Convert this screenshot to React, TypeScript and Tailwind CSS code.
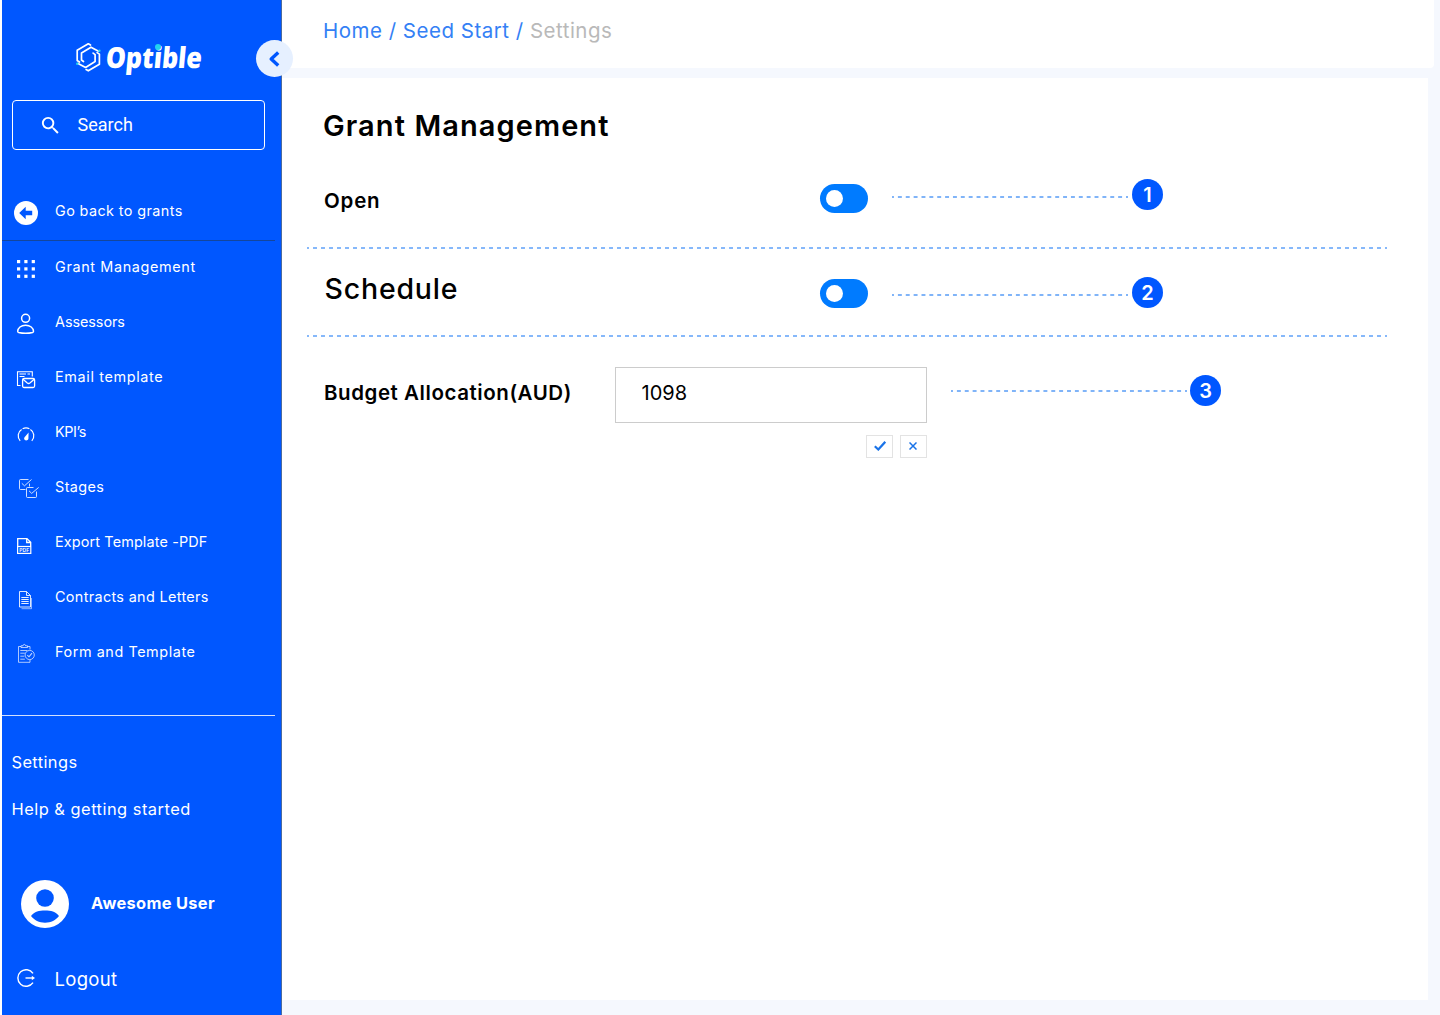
import type { ReactNode } from "react";

function Glyph({ children }: { children: ReactNode }) {
  return (
    <svg
      className="mt-[15px] h-6 w-6 shrink-0 overflow-visible"
      viewBox="0 0 24 24"
      fill="none"
      stroke="white"
      strokeWidth="1"
    >
      {children}
    </svg>
  );
}

const gridIcon = (
  <Glyph>
    {[3, 10.3, 17.7].map((y) =>
      [3, 10.3, 17.7].map((x) => (
        <rect key={`${x}-${y}`} x={x} y={y + 1} width="3.2" height="3.2" fill="white" stroke="none" />
      )),
    )}
  </Glyph>
);

const personIcon = (
  <Glyph>
    <g strokeWidth="1.5">
      <circle cx="11.6" cy="7.3" r="4" />
      <path d="M11.6 14.2c-4.6 0-7.800 2.800-7.900 6.100 0 .6.2.9.8 1.100 4.300 1 9.900 1 14.200 0 .6-.2.8-.5.8-1.100-.1-3.300-3.300-6.100-7.900-6.100z" />
    </g>
  </Glyph>
);

const emailIcon = (
  <Glyph>
    <path d="M6.500 19.500h-3V5.700h14.800v4.800M5.500 8h6.500M5.500 10.500h5M13.500 8h2.500" strokeWidth="1.100" />
    <rect x="8.600" y="12.500" width="12" height="9" rx="1.500" strokeWidth="1.300" />
    <path d="M9 13.200l4.300 3.800q1.300 1 2.600 0l4.300-3.800" strokeWidth="1.300" />
  </Glyph>
);

const gaugeIcon = (
  <Glyph>
    <path d="M6.200 19.800C2.900 16.300 3.900 10.600 7.600 8.400" strokeWidth="1.200" />
    <path d="M8.600 7.700C10.600 6.700 13.500 6.700 15.400 7.700" strokeWidth="1.200" />
    <path d="M16.400 8.400C20.100 10.600 21.100 16.300 17.800 19.800" strokeWidth="1.200" />
    <path d="M14.600 11.500l-.2 6.200c-.3 2.100-3.700 2.300-4.200.4-.3-1.100.3-2 1-2.700z" fill="white" stroke="none" />
  </Glyph>
);

const stagesIcon = (
  <Glyph>
    <g strokeWidth=".9" strokeOpacity=".9">
      <path d="M11.500 13.500H6.500q-1 0-1-1V4.500q0-1 1-1H14.500" />
      <path d="M7.800 7.300l2.700 2.500 7-6.300M15.500 7.500v3" />
      <path d="M19.500 11.500h-6q-1 0-1 1v8q0 1 1 1h8q1 0 1-1v-5" />
      <path d="M15 14.800l2.700 2.600 7-6" />
    </g>
  </Glyph>
);

const pdfIcon = (
  <Glyph>
    <path d="M3.700 15V7.600h9.300l3.700 3.700V15M12.700 7.600v3.900h4" strokeWidth="1.300" />
    <rect x="3.600" y="15.500" width="13.200" height="6.900" strokeWidth="1.200" />
    <text
      x="10.200"
      y="21"
      textAnchor="middle"
      fill="white"
      stroke="none"
      className="font-['Inter'] text-[5px] font-semibold"
    >
      PDF
    </text>
  </Glyph>
);

const contractsIcon = (
  <Glyph>
    <path d="M5.500 5.500h7l4 4v11.500h-11zM12.500 5.500v4h4" strokeOpacity=".85" />
    <path d="M7.300 11.500h7.400M7.300 13.500h7.400M7.300 15.500h7.400M7.300 17.500h7.400" strokeOpacity=".9" />
    <path d="M7.500 22.700h10V12" strokeOpacity=".55" />
  </Glyph>
);

const formIcon = (
  <Glyph>
    <g strokeWidth=".9" strokeOpacity=".75">
      <path d="M7 5.500H4.500v15.800h11.500V19M13.500 5.500h2.500v3" />
      <path d="M7 6.500V4.800h2q.2-1.400 1.300-1.400t1.300 1.400h2v1.700z" />
      <path d="M6.300 9.500h7M6.300 12.200h4.500M6.300 15.200h4M6.300 18.200h4.500" />
      <circle cx="15.700" cy="14" r="4.600" />
      <path d="M13.300 14.200l1.700 1.600 3-3.600" strokeWidth="1.100" />
    </g>
  </Glyph>
);

const items = [
  { label: "Grant Management", icon: gridIcon, tracking: "tracking-[0.64px]" },
  { label: "Assessors", icon: personIcon, tracking: "tracking-[-0.05px]" },
  { label: "Email template", icon: emailIcon, tracking: "tracking-[0.65px]" },
  { label: "KPI’s", icon: gaugeIcon, tracking: "tracking-[-0.4px]" },
  { label: "Stages", icon: stagesIcon, tracking: "tracking-[0.4px]" },
  { label: "Export Template -PDF", icon: pdfIcon, tracking: "tracking-[0.14px]" },
  { label: "Contracts and Letters", icon: contractsIcon, tracking: "tracking-[0.34px]" },
  { label: "Form and Template", icon: formIcon, tracking: "tracking-[0.57px]" },
];

function Logo() {
  return (
    <div className="flex pt-[41px] pl-[73px]">
      <svg
        className="h-[34px] w-[28px] shrink-0"
        viewBox="0 0 28 34"
        fill="none"
        stroke="white"
        strokeWidth="1.700"
        strokeLinecap="round"
        strokeLinejoin="round"
      >
        <path d="M15.500 4L13.300 2.800 2.200 9.300V19.500L4.500 21" />
        <path d="M8.500 20.500L6.500 19V12L16 6.200l7.500 4" />
        <g transform="rotate(180 13.300 16.300)">
          <path d="M15.500 4L13.300 2.800 2.200 9.300V19.500L4.500 21" />
          <path d="M8.500 20.500L6.500 19V12L16 6.200l7.500 4" />
        </g>
        <circle cx="24.400" cy="9.800" r="1.200" fill="#22d3ee" stroke="none" />
        <circle cx="2.200" cy="22.800" r="1.200" fill="#22d3ee" stroke="none" />
      </svg>
      <div className="relative ml-[3px] h-[34px] w-24">
        <div className="origin-left scale-x-[0.87] -skew-x-6 font-['Open_Sans'] text-[29px] leading-[32px] font-extrabold whitespace-nowrap">
          Optible
        </div>
        <span className="absolute top-[3px] left-[49px] h-[6px] w-[6px] rounded-full bg-[#22d3ee]" />
      </div>
    </div>
  );
}

function Sidebar() {
  return (
    <aside className="relative ml-[2px] flex h-[1015px] w-[280px] shrink-0 flex-col border-r border-[#4d6b9c] bg-[#0057ff] text-white">
      <div className="h-[100px]">
        <Logo />
      </div>
      <button className="absolute top-[40px] left-[254px] flex h-[37px] w-[37px] items-center justify-center rounded-full bg-[#e6f0ff] pr-[2px]">
        <svg className="h-[18px] w-[14px]" viewBox="0 0 14 18" fill="none" stroke="#0057ff" strokeWidth="3.400" strokeLinejoin="round">
          <path d="M11.200 2.500L4.200 9l7 6.500" />
        </svg>
      </button>
      <div className="ml-[10px] flex h-[50px] w-[253px] items-center rounded border border-white pl-[26px]">
        <svg className="h-[23px] w-[23px]" viewBox="0 0 24 24" fill="white">
          <path d="M15.500 14h-.79l-.28-.27A6.471 6.471 0 0 0 16 9.500 6.500 6.500 0 1 0 9.500 16c1.610 0 3.090-.59 4.230-1.570l.27.28v.79l5 4.990L20.490 19l-4.990-5zm-6 0C7.010 14 5 11.990 5 9.500S7.010 5 9.500 5 14 7.010 14 9.500 11.990 14 9.500 14z" />
        </svg>
        <span className="ml-[15.500px] font-['Roboto'] text-[18px] leading-6">Search</span>
      </div>
      <div className="mt-[51px] flex h-[39px] w-[273px] pl-3">
        <svg className="h-6 w-6 shrink-0" viewBox="0 0 24 24">
          <circle cx="12" cy="12" r="12" fill="white" />
          <path d="M5.200 12L11.700 5.800v3.900h6.500v4.600h-6.500v3.900z" fill="#0057ff" />
        </svg>
        <span className="ml-[17px] text-[14.400px] leading-5 tracking-[0.4px]">Go back to grants</span>
      </div>
      <nav className="h-[475px] w-[273px] border-t border-[#14469b]">
        {items.map((item) => (
          <a key={item.label} className="flex h-[55px] pl-3">
            {item.icon}
            <span className={`mt-4 ml-[17px] text-[14.400px] leading-5 whitespace-nowrap ${item.tracking}`}>{item.label}</span>
          </a>
        ))}
      </nav>
      <div className="flex w-[273px] flex-col gap-[23px] border-t border-[#d2e0ff] pt-[34px] pl-[9.500px] text-[16.400px] leading-6">
        <span className="tracking-[0.4px]">Settings</span>
        <span className="tracking-[0.5px]">Help &amp; getting started</span>
      </div>
      <div className="mt-[59px] flex h-12 items-center pl-[19px]">
        <svg className="h-12 w-12" viewBox="0 0 48 48">
          <circle cx="24" cy="24" r="24" fill="white" />
          <circle cx="24" cy="18" r="8.800" fill="#0057ff" />
          <path d="M10 36c3.500-4.300 8-5.400 14-5.400s10.500 1.100 14 5.400c-3.300 4.300-8 6.700-14 6.700s-10.700-2.400-14-6.700z" fill="#0057ff" />
        </svg>
        <span className="mb-[2px] ml-[22px] text-[16.400px] leading-6 font-bold tracking-[0.32px]">Awesome User</span>
      </div>
      <div className="mt-[39px] flex h-6 items-center pl-[15px]">
        <svg className="mb-[2px] h-[18px] w-[18px]" viewBox="0 0 18 18" fill="none" stroke="white" strokeWidth="1.400">
          <path d="M16 4.300A8.300 8.300 0 1 0 16 13.700" />
          <path d="M8.500 9h7.500" />
          <path d="M14.800 6.800L18 9l-3.200 2.200z" fill="white" stroke="none" />
        </svg>
        <span className="ml-[19.500px] text-[18.500px] leading-6 tracking-[0.3px]">Logout</span>
      </div>
    </aside>
  );
}

function Toggle() {
  return (
    <button className="flex h-[29px] w-12 shrink-0 items-center rounded-full bg-[#007bff] pl-[6px]">
      <span className="h-[17px] w-[17px] rounded-full bg-white" />
    </button>
  );
}

function Leader() {
  return (
    <svg className="h-[2px] w-[236px]" viewBox="0 0 236 2">
      <path d="M0 1H236" stroke="#80b4f8" strokeWidth="2" strokeDasharray="3.933 3.933" strokeDashoffset="1.967" />
    </svg>
  );
}

function Badge({ n }: { n: number }) {
  return (
    <span className="flex h-[31px] w-[31px] items-center justify-center rounded-full bg-[#0057ff] text-[20px] leading-none font-semibold text-white">
      {n}
    </span>
  );
}

function Divider() {
  return (
    <div className="ml-[25px] h-[2px] w-[1080px] bg-[repeating-linear-gradient(90deg,#86b8fa_0px,#86b8fa_2px,transparent_2px,transparent_6px,#86b8fa_6px,#86b8fa_8px)]" />
  );
}

export default function App() {
  return (
    <div className="flex h-[1015px] w-[1440px] overflow-hidden bg-white font-['Inter',sans-serif] text-black">
      <Sidebar />
      <div className="flex flex-1 flex-col bg-[#f5f8fe]">
        <header className="h-[68px] w-[1152px] rounded-br-[4px] bg-white pt-[17px] pl-[41px] text-[20.500px] leading-7 tracking-[0.500px] whitespace-pre">
          <span className="text-[#3480f5]">Home / Seed Start / </span>
          <span className="text-[#b9b9b9]">Settings</span>
        </header>
        <main className="mt-[10px] h-[922px] w-[1146px] bg-white">
          <h1 className="h-[88px] pt-7 pl-[41px] text-[29px] leading-10 font-semibold tracking-[1.080px]">Grant Management</h1>
          <section className="flex h-[81px] pl-[42px]">
            <h2 className="mt-[21px] w-[496px] text-[20.500px] leading-7 font-semibold tracking-[0.800px]">Open</h2>
            <div className="mt-[18px]">
              <Toggle />
            </div>
            <div className="mt-[13px] ml-6 flex gap-1">
              <div className="pt-[17px]">
                <Leader />
              </div>
              <Badge n={1} />
            </div>
          </section>
          <Divider />
          <section className="flex h-[86px] pl-[42.500px]">
            <h2 className="mt-5 w-[495.500px] text-[28.500px] leading-10 font-medium tracking-[0.800px]">Schedule</h2>
            <div className="mt-[30px]">
              <Toggle />
            </div>
            <div className="mt-7 ml-6 flex gap-1">
              <div className="pt-[17px]">
                <Leader />
              </div>
              <Badge n={2} />
            </div>
          </section>
          <Divider />
          <section className="flex pl-[42px]">
            <h2 className="mt-[42px] w-[291px] text-[20.500px] leading-7 font-semibold tracking-[0.560px]">Budget Allocation(AUD)</h2>
            <div className="mt-[30px] flex w-[312px] flex-col">
              <div className="flex h-14 items-center border border-[#cccccc] pb-1 pl-[25.500px] text-[20px] leading-7">1098</div>
              <div className="mt-3 flex justify-end gap-[7px]">
                <button className="flex h-[23px] w-[27px] items-center justify-center border border-[#e3e3e3] pb-px">
                  <svg className="h-[10px] w-3" viewBox="0 0 12 10" fill="none" stroke="#1a73e8" strokeWidth="2.200">
                    <path d="M.8 5.300l3.500 3.200L11.300.8" />
                  </svg>
                </button>
                <button className="flex h-[23px] w-[27px] items-center justify-center border border-[#e3e3e3] pr-px pb-px">
                  <svg className="h-2 w-2" viewBox="0 0 8 8" fill="none" stroke="#1a73e8" strokeWidth="1.500">
                    <path d="M.5.500l7 7M7.500.500l-7 7" />
                  </svg>
                </button>
              </div>
            </div>
            <div className="mt-[38px] ml-6 flex gap-[3px]">
              <div className="pt-[15px]">
                <Leader />
              </div>
              <Badge n={3} />
            </div>
          </section>
        </main>
      </div>
    </div>
  );
}
